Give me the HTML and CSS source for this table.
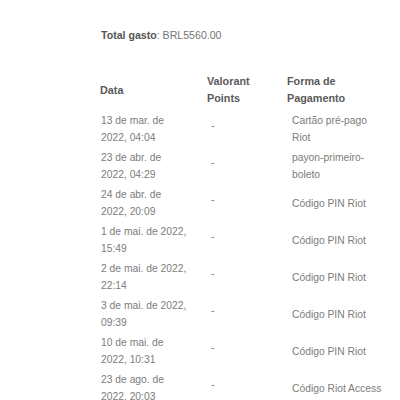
FILE: index.html
```html
<!DOCTYPE html>
<html lang="pt-BR">
<head>
<meta charset="utf-8">
<link rel="stylesheet" href="styles.css">
</head>
<body>
<div class="page">
  <p class="total"><strong>Total gasto</strong>: BRL5560.00</p>
  <div class="history">
    <div class="th c1">Data</div>
    <div class="th c2">Valorant Points</div>
    <div class="th c3">Forma de Pagamento</div>

    <div class="td c1">13 de mar. de 2022, 04:04</div><div class="td c2">-</div><div class="td c3">Cartão pré-pago Riot</div>
    <div class="td c1">23 de abr. de 2022, 04:29</div><div class="td c2">-</div><div class="td c3">payon-primeiro-boleto</div>
    <div class="td c1">24 de abr. de 2022, 20:09</div><div class="td c2">-</div><div class="td c3">Código PIN Riot</div>
    <div class="td c1">1 de mai. de 2022, 15:49</div><div class="td c2">-</div><div class="td c3">Código PIN Riot</div>
    <div class="td c1">2 de mai. de 2022, 22:14</div><div class="td c2">-</div><div class="td c3">Código PIN Riot</div>
    <div class="td c1">3 de mai. de 2022, 09:39</div><div class="td c2">-</div><div class="td c3">Código PIN Riot</div>
    <div class="td c1">10 de mai. de 2022, 10:31</div><div class="td c2">-</div><div class="td c3">Código PIN Riot</div>
    <div class="td c1">23 de ago. de 2022, 20:03</div><div class="td c2">-</div><div class="td c3">Código Riot Access</div>
  </div>
</div>
</body>
</html>
```
FILE: styles.css
```css
html, body {
  margin: 0;
  padding: 0;
  background: #ffffff;
}
body {
  font-family: "Liberation Sans", Arial, sans-serif;
  font-size: 10.3px;
  line-height: 17px;
  color: #7c7c7c;
}
.page {
  padding: 27px 0 0 98px;
}
.total {
  margin: 0 0 29px 3px;
  font-size: 10.6px;
  color: #767676;
}
.total strong {
  color: #555555;
  font-weight: bold;
}
.history {
  display: grid;
  grid-template-columns: 106px 80px 100px;
  align-items: center;
}
.th {
  font-size: 10.8px;
  font-weight: bold;
  color: #5a5a5a;
  padding-bottom: 3.5px;
}
.td {
  padding: 1.5px 0;
}
.th.c1 { padding-left: 2px; }
.th.c2 { padding-left: 3px; }
.th.c3 { padding-left: 3px; }
.td.c1 { padding-left: 3px; padding-right: 15px; }
.td.c2 { padding-left: 7px; padding-bottom: 8px; }
.td.c3 { padding-left: 8px; }
```
